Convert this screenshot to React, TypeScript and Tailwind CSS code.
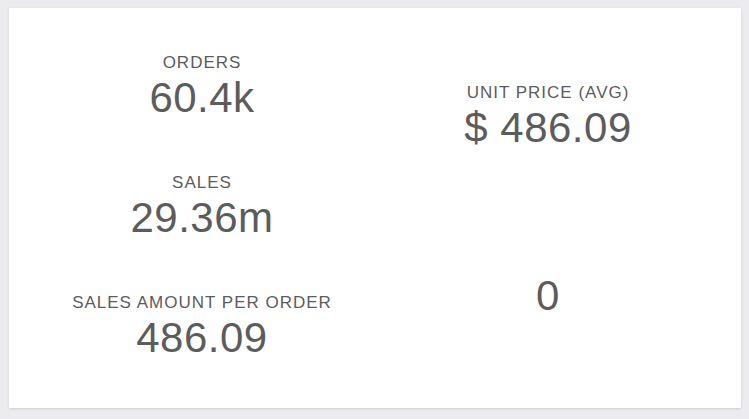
import React from 'react';

type Metric = { label?: string; value: string };

const leftMetrics: Metric[] = [
  { label: 'ORDERS', value: '60.4k' },
  { label: 'SALES', value: '29.36m' },
  { label: 'SALES AMOUNT PER ORDER', value: '486.09' },
];

const rightMetrics: Metric[] = [
  { label: 'UNIT PRICE (AVG)', value: '$ 486.09' },
  { value: '0' },
];

function MetricBlock({ label, value }: Metric) {
  return (
    <div className="flex-1 flex flex-col items-center justify-center text-[#5c5c5c]">
      {label && <div className="text-[17px] leading-none tracking-[1px] mb-[6px]">{label}</div>}
      <div className="text-[42px] leading-none tracking-[0.5px]">{value}</div>
    </div>
  );
}

export default function App() {
  return (
    <div
      className="w-[749px] h-[419px] bg-[#ececf0] pt-2 pl-[9px] pr-[8px]"
      style={{ fontFamily: '"Liberation Sans", Arial, sans-serif' }}
    >
      {/* KPI card */}
      <div className="h-[400px] bg-white shadow-sm px-5 pt-[18px] pb-[22px] grid grid-cols-2">
        <div className="flex flex-col">
          {leftMetrics.map((m) => (
            <MetricBlock key={m.value} {...m} />
          ))}
        </div>
        <div className="flex flex-col">
          {rightMetrics.map((m) => (
            <MetricBlock key={m.value} {...m} />
          ))}
        </div>
      </div>
    </div>
  );
}
